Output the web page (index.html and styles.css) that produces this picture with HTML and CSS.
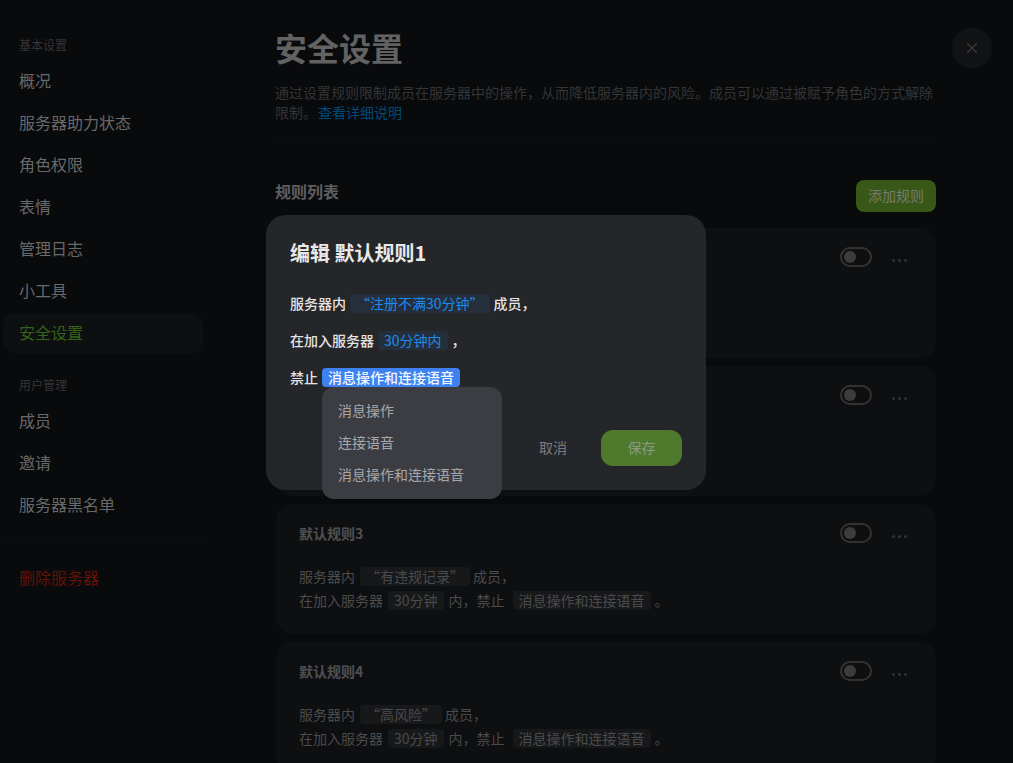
FILE: index.html
```html
<!DOCTYPE html>
<html lang="zh-CN">
<head>
  <meta charset="UTF-8">
  <title>安全设置</title>
  <link rel="stylesheet" href="styles.css">
</head>
<body>
  <div class="page">
    <nav class="sidebar">
      <div class="nav-label">基本设置</div>
      <a class="nav-item">概况</a>
      <a class="nav-item">服务器助力状态</a>
      <a class="nav-item">角色权限</a>
      <a class="nav-item">表情</a>
      <a class="nav-item">管理日志</a>
      <a class="nav-item">小工具</a>
      <a class="nav-item active">安全设置</a>
      <div class="nav-label second">用户管理</div>
      <a class="nav-item">成员</a>
      <a class="nav-item">邀请</a>
      <a class="nav-item">服务器黑名单</a>
      <div class="nav-divider"></div>
      <a class="nav-item danger">删除服务器</a>
    </nav>

    <main class="content">
      <h1>安全设置</h1>
      <p class="desc">通过设置规则限制成员在服务器中的操作，从而降低服务器内的风险。成员可以通过被赋予角色的方式解除限制。<a class="link">查看详细说明</a></p>
      <div class="divider"></div>

      <div class="list-head">
        <h2>规则列表</h2>
        <button class="add-btn">添加规则</button>
      </div>

      <!-- first two cards sit behind the dialog, only their controls show -->
      <div class="card">
        <div class="card-head">
          <span class="card-title"></span>
          <span class="toggle"><span class="knob"></span></span>
          <span class="dots"><i></i><i></i><i></i></span>
        </div>
      </div>
      <div class="card">
        <div class="card-head">
          <span class="card-title"></span>
          <span class="toggle"><span class="knob"></span></span>
          <span class="dots"><i></i><i></i><i></i></span>
        </div>
      </div>
      <div class="card">
        <div class="card-head">
          <span class="card-title">默认规则3</span>
          <span class="toggle"><span class="knob"></span></span>
          <span class="dots"><i></i><i></i><i></i></span>
        </div>
        <div class="card-text">服务器内<span class="chip">“有违规记录”</span>成员，</div>
        <div class="card-text">在加入服务器<span class="chip time">30分钟</span>内，禁止<span class="chip action">消息操作和连接语音</span>。</div>
      </div>
      <div class="card">
        <div class="card-head">
          <span class="card-title">默认规则4</span>
          <span class="toggle"><span class="knob"></span></span>
          <span class="dots"><i></i><i></i><i></i></span>
        </div>
        <div class="card-text">服务器内<span class="chip">“高风险”</span>成员，</div>
        <div class="card-text">在加入服务器<span class="chip time">30分钟</span>内，禁止<span class="chip action">消息操作和连接语音</span>。</div>
      </div>
    </main>

    <button class="close-btn">
      <svg width="12" height="12" viewBox="0 0 12 12"><path d="M1 1L11 11M11 1L1 11" stroke="#3b3b3c" stroke-width="1.2" fill="none"/></svg>
    </button>
  </div>

  <!-- edit dialog -->
  <div class="modal">
    <div class="modal-title">编辑 默认规则1</div>
    <div class="modal-row">服务器内<span class="pick">“注册不满30分钟”</span>成员，</div>
    <div class="modal-row">在加入服务器<span class="pick">30分钟内</span>，</div>
    <div class="modal-row">禁止<span class="pick-wrap"><span class="pick open">消息操作和连接语音</span>
      <div class="menu">
        <div class="menu-item">消息操作</div>
        <div class="menu-item">连接语音</div>
        <div class="menu-item">消息操作和连接语音</div>
      </div>
    </span></div>
    <div class="modal-actions">
      <button class="cancel-btn">取消</button>
      <button class="save-btn">保存</button>
    </div>
  </div>
</body>
</html>
```

FILE: styles.css
```css
html, body {
  margin: 0;
  height: 100%;
  overflow: hidden;
}

body {
  position: relative;
  font-family: "Noto Sans CJK SC", "Liberation Sans", sans-serif;
  font-size: 14px;
  background-color: #090a0c;
  color: #4b4b4c;
}

.page {
  display: flex;
  align-items: flex-start;
}

/* sidebar */
.sidebar {
  width: 200px;
  flex-shrink: 0;
  padding: 35px 0 0 3px;
}

.nav-label {
  height: 20px;
  line-height: 20px;
  margin-bottom: 6px;
  padding-left: 16px;
  font-size: 12px;
  color: #363637;
}

.nav-label.second {
  margin-top: 22px;
}

.nav-item {
  display: block;
  height: 40px;
  line-height: 38px;
  margin-bottom: 2px;
  padding-left: 16px;
  border-radius: 12px;
  font-size: 16px;
  color: #68696a;
}

.nav-item.active {
  background-color: #0e0f11;
  color: #37621a;
}

.nav-item.danger {
  color: #641207;
}

.nav-divider {
  height: 1px;
  margin: 15px 0 17px -3px;
  background-color: #0d0e10;
}

/* main column */
.content {
  width: 661px;
  flex-shrink: 0;
  margin-left: 72px;
  padding-top: 28px;
}

h1 {
  margin: 0;
  height: 44px;
  line-height: 38px;
  font-size: 32px;
  font-weight: 700;
  color: #626263;
}

.desc {
  margin: 10px 0 0;
  line-height: 20px;
  color: #343537;
}

.link {
  margin-left: 1px;
  color: #004a78;
}

.divider {
  height: 1px;
  margin-top: 17px;
  background-color: #0d0e10;
}

.list-head {
  display: flex;
  align-items: flex-start;
  justify-content: space-between;
  margin-top: 40px;
  height: 32px;
}

h2 {
  margin: 0;
  font-size: 16px;
  font-weight: 700;
  line-height: 22px;
  color: #5e5e5f;
}

.add-btn {
  width: 80px;
  height: 32px;
  padding: 0 0 2px;
  border: none;
  border-radius: 8px;
  background-color: #385818;
  color: #777b70;
  font: inherit;
}

.card {
  height: 130px;
  box-sizing: border-box;
  margin: 8px 0 0 1px;
  padding: 16px 24px 0 23px;
  border-radius: 16px;
  background-color: #0e0f11;
}

.list-head + .card {
  margin-top: 16px;
}

.card-head {
  display: flex;
  align-items: center;
  height: 26px;
  margin-bottom: 18px;
}

.card-title {
  flex: 1;
  font-weight: 700;
  color: #505051;
}

.toggle {
  display: block;
  width: 32px;
  height: 20px;
  box-sizing: border-box;
  padding: 2px;
  border: 2px solid #333334;
  border-radius: 10px;
}

.knob {
  display: block;
  width: 12px;
  height: 12px;
  border-radius: 50%;
  background-color: #3c3c3d;
}

.dots {
  display: flex;
  gap: 3px;
  margin: 6px 5px 0 20px;
}

.dots i {
  display: block;
  width: 3px;
  height: 3px;
  border-radius: 50%;
  background-color: #333334;
}

.card-text {
  height: 24px;
  line-height: 24px;
  white-space: nowrap;
}

.chip {
  display: inline-block;
  height: 19px;
  line-height: 19px;
  margin: 0 3px 0 5px;
  padding: 0 6px;
  border-radius: 4px;
  background-color: #17181a;
}

.chip.time {
  margin-right: 5px;
}

.chip.action {
  margin: 0 4px 0 8px;
}

.close-btn {
  width: 40px;
  height: 40px;
  margin: 28px 0 0 16px;
  padding: 0;
  flex-shrink: 0;
  display: flex;
  align-items: center;
  justify-content: center;
  border: none;
  border-radius: 50%;
  background-color: #111214;
}

/* dialog */
.modal {
  position: absolute;
  top: 215px;
  left: 266px;
  width: 440px;
  box-sizing: border-box;
  padding: 24px;
  border-radius: 20px;
  background-color: #25262a;
  color: #e4e4e4;
}

.modal-title {
  height: 28px;
  line-height: 28px;
  margin-bottom: 18px;
  font-size: 20px;
  font-weight: 700;
  color: #e8e8e8;
}

.modal-row {
  height: 37px;
  line-height: 37px;
  font-weight: 500;
  white-space: nowrap;
}

.pick {
  display: inline-block;
  height: 19px;
  line-height: 18px;
  margin: 0 4px;
  padding: 0 6px;
  border-radius: 4px;
  background-color: #252e3b;
  color: #1a8cf0;
  font-weight: 400;
}

.pick.open {
  background-color: #3d82f0;
  color: #f2f6fd;
  font-weight: 500;
}

.pick-wrap {
  position: relative;
  display: inline-block;
}

.menu {
  position: absolute;
  top: 28px;
  left: 4px;
  width: 180px;
  box-sizing: border-box;
  padding: 8px 0;
  border-radius: 12px;
  background-color: #3c3d42;
  color: #a8a8aa;
  font-weight: 400;
  z-index: 2;
}

.menu-item {
  height: 32px;
  line-height: 30px;
  padding-left: 16px;
}

.modal-actions {
  display: flex;
  justify-content: flex-end;
  align-items: center;
  margin-top: 34px;
}

.cancel-btn {
  width: 27px;
  padding: 0 0 2px;
  border: none;
  background: none;
  color: #7c7c7f;
  font: inherit;
  white-space: nowrap;
}

.save-btn {
  width: 81px;
  height: 36px;
  margin-left: 35px;
  padding: 0 0 2px;
  border: none;
  border-radius: 12px;
  background-color: #4f7a2e;
  color: #8b9a7e;
  font: inherit;
}
```
